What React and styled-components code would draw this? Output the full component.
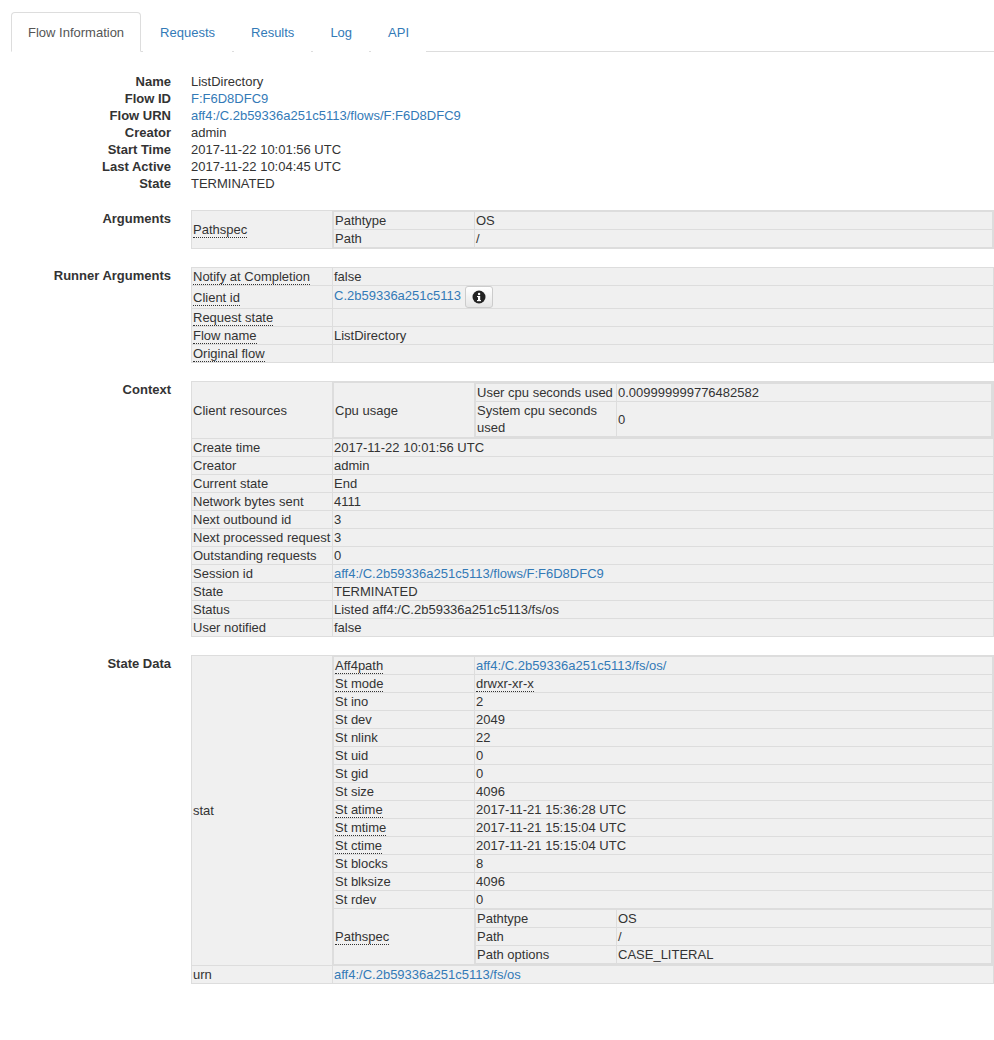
import React from "react";
import styled, { createGlobalStyle } from "styled-components";

const Global = createGlobalStyle`
  body { margin: 0; font-family: "Liberation Sans", Arial, sans-serif; font-size: 13px; line-height: 17px; color: #333; background: #fff; }
`;

const Page = styled.div`padding: 12px 0 60px 11px;`;
const Tabs = styled.ul`
  display: flex; list-style: none; margin: 0; padding: 0;
  border-bottom: 1px solid #ddd;
`;
const Tab = styled.li`
  padding: 11px 16px 10px; margin-bottom: -1px;
  border: 1px solid ${p => (p.$active ? "#ddd" : "transparent")};
  border-bottom-color: ${p => (p.$active ? "#fff" : "transparent")};
  border-radius: 4px 4px 0 0; background: #fff;
  color: ${p => (p.$active ? "#555" : "#337ab7")};
  margin-right: 2px;
`;
const Dl = styled.div`
  display: grid; grid-template-columns: 160px 1fr; column-gap: 20px;
  margin-top: 21px;
`;
const Dt = styled.div`font-weight: bold; text-align: right; margin-top: ${p => p.$gap || 0}px;`;
const Dd = styled.div`margin-top: ${p => p.$gap || 0}px; min-width: 0;`;
const Link = styled.span`color: #337ab7;`;
const Abbr = styled.span`border-bottom: 1px dotted #333;`;
const Table = styled.table`
  border-collapse: collapse; width: 100%; background: #f0f0f0;
  border: 1px solid #ddd;
`;
const Td = styled.td`
  border: 1px solid #ddd; padding: ${p => (p.$nest ? "0" : "0 1px")};
  vertical-align: middle; white-space: ${p => (p.$wrap ? "normal" : "nowrap")};
  width: ${p => (p.$key ? "138px" : "auto")};
`;
const InfoBtn = styled.span`
  display: inline-flex; align-items: center; justify-content: center;
  width: 26px; height: 20px; margin-left: 4px; vertical-align: middle;
  border: 1px solid #ccc; border-radius: 3px; background: linear-gradient(#fff, #e6e6e6);
`;

const L = t => <Link>{t}</Link>;
const A = t => <Abbr>{t}</Abbr>;

function renderValue(v) {
  if (Array.isArray(v)) return <KV rows={v} />;
  return v;
}
function KV({ rows }) {
  return (
    <Table>
      <tbody>
        {rows.map(([k, v], i) => (
          <tr key={i}>
            <Td $key $wrap={typeof k === "string" && k.startsWith("System")}>{k}</Td>
            <Td $nest={Array.isArray(v)}>{renderValue(v)}</Td>
          </tr>
        ))}
      </tbody>
    </Table>
  );
}

const info = (
  <InfoBtn>
    <svg width="14" height="14" viewBox="0 0 14 14">
      <circle cx="7" cy="7" r="6.5" fill="#222" />
      <rect x="6" y="6" width="2.2" height="4.5" fill="#fff" />
      <rect x="5" y="10" width="4" height="1.2" fill="#fff" />
      <rect x="5" y="6" width="2" height="1.1" fill="#fff" />
      <circle cx="7.1" cy="4" r="1.2" fill="#fff" />
    </svg>
  </InfoBtn>
);

const pathspec = [["Pathtype", "OS"], ["Path", "/"]];

export default function App() {
  const top = [
    ["Name", "ListDirectory"],
    ["Flow ID", L("F:F6D8DFC9")],
    ["Flow URN", L("aff4:/C.2b59336a251c5113/flows/F:F6D8DFC9")],
    ["Creator", "admin"],
    ["Start Time", "2017-11-22 10:01:56 UTC"],
    ["Last Active", "2017-11-22 10:04:45 UTC"],
    ["State", "TERMINATED"],
  ];
  const sections = [
    ["Arguments", [[A("Pathspec"), pathspec]]],
    ["Runner Arguments", [
      [A("Notify at Completion"), "false"],
      [A("Client id"), <>{L("C.2b59336a251c5113")}{info}</>],
      [A("Request state"), ""],
      [A("Flow name"), "ListDirectory"],
      [A("Original flow"), ""],
    ]],
    ["Context", [
      ["Client resources", [["Cpu usage", [["User cpu seconds used", "0.009999999776482582"], ["System cpu seconds used", "0"]]]]],
      ["Create time", "2017-11-22 10:01:56 UTC"],
      ["Creator", "admin"],
      ["Current state", "End"],
      ["Network bytes sent", "4111"],
      ["Next outbound id", "3"],
      ["Next processed request", "3"],
      ["Outstanding requests", "0"],
      ["Session id", L("aff4:/C.2b59336a251c5113/flows/F:F6D8DFC9")],
      ["State", "TERMINATED"],
      ["Status", "Listed aff4:/C.2b59336a251c5113/fs/os"],
      ["User notified", "false"],
    ]],
    ["State Data", [
      ["stat", [
        [A("Aff4path"), L("aff4:/C.2b59336a251c5113/fs/os/")],
        [A("St mode"), A("drwxr-xr-x")],
        ["St ino", "2"], ["St dev", "2049"], ["St nlink", "22"], ["St uid", "0"], ["St gid", "0"], ["St size", "4096"],
        [A("St atime"), "2017-11-21 15:36:28 UTC"],
        [A("St mtime"), "2017-11-21 15:15:04 UTC"],
        [A("St ctime"), "2017-11-21 15:15:04 UTC"],
        ["St blocks", "8"], ["St blksize", "4096"], ["St rdev", "0"],
        [A("Pathspec"), [["Pathtype", "OS"], ["Path", "/"], ["Path options", "CASE_LITERAL"]]],
      ]],
      ["urn", L("aff4:/C.2b59336a251c5113/fs/os")],
    ]],
  ];
  return (
    <Page>
      <Global />
      <Tabs>
        <Tab $active>Flow Information</Tab>
        <Tab>Requests</Tab>
        <Tab>Results</Tab>
        <Tab>Log</Tab>
        <Tab>API</Tab>
      </Tabs>
      <Dl>
        {top.map(([k, v]) => (
          <React.Fragment key={k}><Dt>{k}</Dt><Dd>{v}</Dd></React.Fragment>
        ))}
        {sections.map(([k, rows]) => (
          <React.Fragment key={k}>
            <Dt $gap={18}>{k}</Dt>
            <Dd $gap={18}><KV rows={rows} /></Dd>
          </React.Fragment>
        ))}
      </Dl>
    </Page>
  );
}
